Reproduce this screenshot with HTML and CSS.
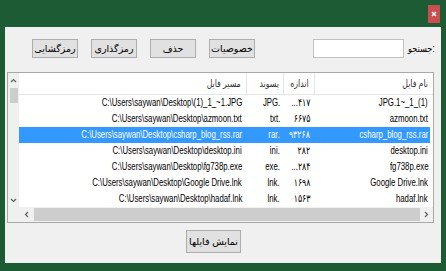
FILE: index.html
```html
<!DOCTYPE html>
<html lang="fa">
<head>
<meta charset="utf-8">
<link rel="stylesheet" href="styles.css">
</head>
<body>
<div class="window">
  <div class="titlebar">
    <div class="close">
      <svg width="6" height="6" viewBox="0 0 6 6"><path d="M1 1 L5 5 M5 1 L1 5" stroke="#fff" stroke-width="1.4"/></svg>
    </div>
  </div>
  <div class="client">
    <div class="toolbar">
      <button class="btn">رمزگشایی</button>
      <button class="btn">رمزگذاری</button>
      <button class="btn">حذف</button>
      <button class="btn">خصوصیات</button>
      <input class="search-input" type="text">
      <span class="search-label">جستجو:</span>
    </div>
    <div class="list">
      <div class="list-main">
        <div class="vscroll">
          <div class="varrow"><svg width="7" height="5" viewBox="0 0 7 5"><path d="M1 4 L3.5 1.5 L6 4" stroke="#606060" stroke-width="1.2" fill="none"/></svg></div>
          <div class="vthumb"></div>
          <div class="vtrack"></div>
          <div class="varrow"><svg width="7" height="5" viewBox="0 0 7 5"><path d="M1 1 L3.5 3.5 L6 1" stroke="#606060" stroke-width="1.2" fill="none"/></svg></div>
        </div>
        <div class="grid">
          <div class="row header">
            <div class="cell c-path" dir="rtl"><span class="t">مسیر فایل</span></div>
            <div class="cell c-ext" dir="rtl"><span class="t">پسوند</span></div>
            <div class="cell c-size" dir="rtl"><span class="t">اندازه</span></div>
            <div class="cell c-name" dir="rtl"><span class="t">نام فایل</span></div>
          </div>
          <div class="row">
            <div class="cell c-path" dir="rtl"><span class="t">C:\Users\saywan\Desktop\(1)_1_~1.JPG</span></div>
            <div class="cell c-ext" dir="rtl"><span class="t">.JPG</span></div>
            <div class="cell c-size" dir="rtl"><span class="t">۴۱۷...</span></div>
            <div class="cell c-name" dir="rtl"><span class="t">(1)_1_~1.JPG</span></div>
          </div>
          <div class="row">
            <div class="cell c-path" dir="rtl"><span class="t">C:\Users\saywan\Desktop\azmoon.txt</span></div>
            <div class="cell c-ext" dir="rtl"><span class="t">.txt</span></div>
            <div class="cell c-size" dir="rtl"><span class="t">۶۶۷۵</span></div>
            <div class="cell c-name" dir="rtl"><span class="t">azmoon.txt</span></div>
          </div>
          <div class="row selected">
            <div class="cell c-path" dir="rtl"><span class="t">C:\Users\saywan\Desktop\csharp_blog_rss.rar</span></div>
            <div class="cell c-ext" dir="rtl"><span class="t">.rar</span></div>
            <div class="cell c-size" dir="rtl"><span class="t">۹۳۲۶۸</span></div>
            <div class="cell c-name" dir="rtl"><span class="t">csharp_blog_rss.rar</span></div>
          </div>
          <div class="row">
            <div class="cell c-path" dir="rtl"><span class="t">C:\Users\saywan\Desktop\desktop.ini</span></div>
            <div class="cell c-ext" dir="rtl"><span class="t">.ini</span></div>
            <div class="cell c-size" dir="rtl"><span class="t">۲۸۲</span></div>
            <div class="cell c-name" dir="rtl"><span class="t">desktop.ini</span></div>
          </div>
          <div class="row">
            <div class="cell c-path" dir="rtl"><span class="t">C:\Users\saywan\Desktop\fg738p.exe</span></div>
            <div class="cell c-ext" dir="rtl"><span class="t">.exe</span></div>
            <div class="cell c-size" dir="rtl"><span class="t">۲۸۴...</span></div>
            <div class="cell c-name" dir="rtl"><span class="t">fg738p.exe</span></div>
          </div>
          <div class="row">
            <div class="cell c-path" dir="rtl"><span class="t">C:\Users\saywan\Desktop\Google Drive.lnk</span></div>
            <div class="cell c-ext" dir="rtl"><span class="t">.lnk</span></div>
            <div class="cell c-size" dir="rtl"><span class="t">۱۶۹۸</span></div>
            <div class="cell c-name" dir="rtl"><span class="t">Google Drive.lnk</span></div>
          </div>
          <div class="row">
            <div class="cell c-path" dir="rtl"><span class="t">C:\Users\saywan\Desktop\hadaf.lnk</span></div>
            <div class="cell c-ext" dir="rtl"><span class="t">.lnk</span></div>
            <div class="cell c-size" dir="rtl"><span class="t">۱۵۶۳</span></div>
            <div class="cell c-name" dir="rtl"><span class="t">hadaf.lnk</span></div>
          </div>
        </div>
      </div>
      <div class="hscroll">
        <div class="corner"></div>
        <div class="harrow harrow-l"><svg width="5" height="7" viewBox="0 0 5 7"><path d="M4 1 L1.5 3.5 L4 6" stroke="#606060" stroke-width="1.2" fill="none"/></svg></div>
        <div class="hthumb"></div>
        <div class="harrow harrow-r"><svg width="5" height="7" viewBox="0 0 5 7"><path d="M1 1 L3.5 3.5 L1 6" stroke="#606060" stroke-width="1.2" fill="none"/></svg></div>
      </div>
    </div>
    <div class="footer">
      <button class="btn btn-lg">نمایش فایلها</button>
    </div>
  </div>
</div>
</body>
</html>
```

FILE: styles.css
```css
html, body {
  margin: 0;
  padding: 0;
}
body {
  font-family: "Liberation Sans", "DejaVu Sans", sans-serif;
  font-size: 10px;
  color: #000;
}
.window {
  width: 446px;
  height: 271px;
  background: #1d5b34;
  display: flex;
  flex-direction: column;
  box-sizing: border-box;
}
.titlebar {
  height: 27px;
  display: flex;
  justify-content: flex-end;
  align-items: flex-start;
  flex: none;
}
.close {
  margin-top: 5px;
  margin-right: 6px;
  width: 12px;
  height: 18px;
  background: #c94f4f;
  display: flex;
  align-items: center;
  justify-content: center;
}
.client {
  margin: 0 5px;
  height: 236px;
  background: #f0f0f0;
  display: flex;
  flex-direction: column;
  flex: none;
}
.toolbar {
  margin-top: 12px;
  height: 19px;
  display: flex;
  align-items: center;
  padding-left: 27px;
}
.btn {
  font: inherit;
  font-size: 9.5px;
  width: 46px;
  height: 19px;
  padding: 0;
  margin: 0 13px 0 0;
  background: #e1e1e1;
  border: 1px solid #adadad;
  color: #000;
  box-sizing: border-box;
}
.btn:nth-child(4) {
  margin-right: 0;
}
.search-input {
  margin-left: 58px;
  width: 91px;
  height: 19px;
  box-sizing: border-box;
  border: 1px solid #c2c2c2;
  background: #fff;
  padding: 0;
}
.search-label {
  margin-left: 4px;
  display: inline-block;
  transform: scaleX(0.82);
  transform-origin: 0 50%;
}
.list {
  margin-top: 14px;
  margin-left: 2px;
  width: 427px;
  height: 151px;
  box-sizing: border-box;
  border: 1px solid #a8a8a8;
  background: #fff;
  display: flex;
  flex-direction: column;
}
.list-main {
  height: 134px;
  display: flex;
}
.vscroll {
  width: 11px;
  background: #f0f0f0;
  display: flex;
  flex-direction: column;
}
.varrow {
  height: 14px;
  display: flex;
  align-items: center;
  justify-content: center;
  flex: none;
}
.vthumb {
  height: 15px;
  margin: 1px 1px 0 2px;
  background: #cdcdcd;
  flex: none;
}
.vtrack {
  flex: 1;
}
.grid {
  width: 414px;
  display: flex;
  flex-direction: column;
}
.row {
  display: flex;
  width: 411px;
  height: 16px;
  align-items: center;
}
.row.header {
  height: 21px;
  border-bottom: 1px solid #e5e5e5;
  width: 414px;
  color: #333;
}
.row.selected {
  background: #3399ff;
  color: #fff;
}
.cell {
  box-sizing: border-box;
  text-align: right;
  padding-right: 5px;
  white-space: nowrap;
  overflow: visible;
  line-height: 16px;
}
.t {
  display: inline-block;
  transform: scaleX(0.78);
  transform-origin: 100% 50%;
}
.header .cell {
  height: 21px;
  line-height: 21px;
  border-right: 1px solid #e5e5e5;
}
.header .c-name {
  border-right: none;
}
.c-path { width: 228px; }
.c-ext { width: 37px; padding-right: 4px; }
.c-size { width: 31px; }
.c-name { width: 115px; padding-right: 2px; }
.hscroll {
  height: 15px;
  display: flex;
  background: #f0f0f0;
}
.corner {
  width: 11px;
  background: #f0f0f0;
}
.harrow {
  display: flex;
  align-items: center;
  justify-content: center;
}
.harrow-l { width: 15px; }
.harrow-r { width: 13px; }
.hthumb {
  flex: 1;
  margin: 1px 0;
  background: #cdcdcd;
}
.footer {
  padding-left: 181px;
  margin-top: 7px;
}
.btn-lg {
  width: 55px;
  height: 23px;
  margin: 0;
}
```
